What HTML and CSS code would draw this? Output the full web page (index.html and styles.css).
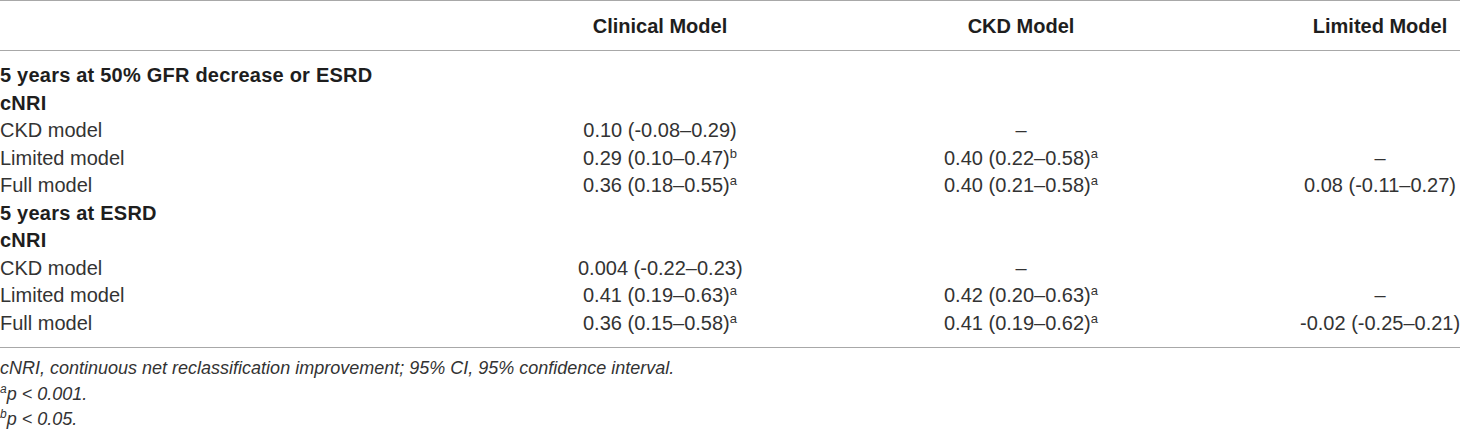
FILE: index.html
```html
<!DOCTYPE html>
<html>
<head>
<meta charset="utf-8">
<link rel="stylesheet" href="styles.css">
</head>
<body>
<table class="results">
  <colgroup>
    <col class="c-label">
    <col class="c-clin">
    <col class="c-ckd">
    <col class="c-lim">
  </colgroup>
  <thead>
    <tr>
      <th></th>
      <th>Clinical Model</th>
      <th>CKD Model</th>
      <th>Limited Model</th>
    </tr>
  </thead>
  <tbody>
    <tr class="first"><td class="section">5 years at 50% GFR decrease or ESRD</td><td></td><td></td><td></td></tr>
    <tr><td class="section">cNRI</td><td></td><td></td><td></td></tr>
    <tr><td>CKD model</td><td>0.10 (-0.08–0.29)</td><td>–</td><td></td></tr>
    <tr><td>Limited model</td><td>0.29 (0.10–0.47)<sup>b</sup></td><td>0.40 (0.22–0.58)<sup>a</sup></td><td>–</td></tr>
    <tr><td>Full model</td><td>0.36 (0.18–0.55)<sup>a</sup></td><td>0.40 (0.21–0.58)<sup>a</sup></td><td>0.08 (-0.11–0.27)</td></tr>
    <tr><td class="section">5 years at ESRD</td><td></td><td></td><td></td></tr>
    <tr><td class="section">cNRI</td><td></td><td></td><td></td></tr>
    <tr><td>CKD model</td><td>0.004 (-0.22–0.23)</td><td>–</td><td></td></tr>
    <tr><td>Limited model</td><td>0.41 (0.19–0.63)<sup>a</sup></td><td>0.42 (0.20–0.63)<sup>a</sup></td><td>–</td></tr>
    <tr class="last"><td>Full model</td><td>0.36 (0.15–0.58)<sup>a</sup></td><td>0.41 (0.19–0.62)<sup>a</sup></td><td>-0.02 (-0.25–0.21)</td></tr>
  </tbody>
</table>
<div class="notes">
  <p>cNRI, continuous net reclassification improvement; 95% CI, 95% confidence interval.</p>
  <p><sup>a</sup>p &lt; 0.001.</p>
  <p><sup>b</sup>p &lt; 0.05.</p>
</div>
</body>
</html>
```
FILE: styles.css
```css
html, body {
  margin: 0;
  padding: 0;
  background: #ffffff;
}
body {
  font-family: "Liberation Sans", Arial, sans-serif;
  font-size: 20px;
  color: #333333;
  width: 1460px;
}
.results {
  width: 1460px;
  border-collapse: collapse;
  table-layout: fixed;
}
.c-label { width: 578px; }
.c-clin { width: 164px; }
.c-ckd { width: 558px; }
.c-lim { width: 160px; }

.results th {
  font-weight: bold;
  color: #1e1e1e;
  height: 48px;
  padding: 1px 0 0;
  text-align: center;
  vertical-align: middle;
  border-top: 1px solid #a8a8a8;
  border-bottom: 1px solid #a8a8a8;
}
.results td {
  padding: 0;
  height: 27.5px;
  line-height: 27.5px;
  text-align: center;
  white-space: nowrap;
}
.results td:first-child {
  text-align: left;
}
.results td.section {
  font-weight: bold;
  color: #1e1e1e;
  letter-spacing: 0.22px;
}
.results tr.first td {
  padding-top: 11px;
}
.results tr.last td {
  padding-bottom: 10px;
  border-bottom: 1px solid #a8a8a8;
}
sup {
  font-size: 13px;
  line-height: 0;
  vertical-align: 7px;
}
.notes {
  padding-top: 8px;
  font-style: italic;
  font-size: 18px;
}
.notes p {
  margin: 0;
  line-height: 25.5px;
}
.notes sup {
  font-size: 12px;
}
```
